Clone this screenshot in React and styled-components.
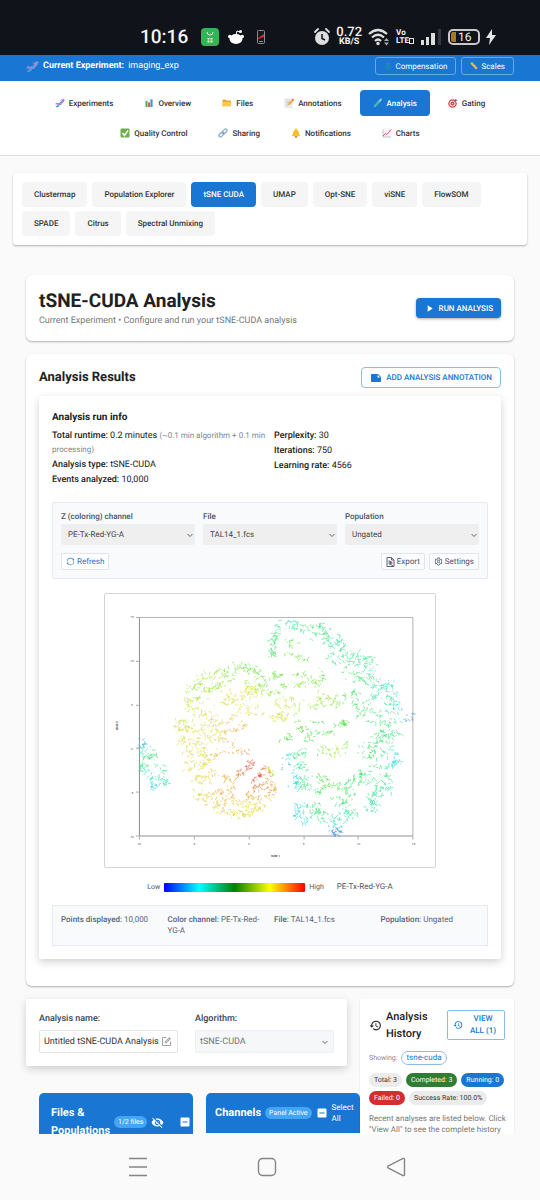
import { useMemo, useState } from 'react';
import styled, { createGlobalStyle } from 'styled-components';
import { MdHistory, MdIndeterminateCheckBox, MdNote, MdPlayArrow, MdVisibilityOff } from 'react-icons/md';
import { AiOutlineForm, AiOutlineSetting, AiOutlineSync } from 'react-icons/ai';

const navItems = [
  { label: 'Experiments', icon: 'dna' },
  { label: 'Overview', icon: 'bars' },
  { label: 'Files', icon: 'folder' },
  { label: 'Annotations', icon: 'memo' },
  { label: 'Analysis', icon: 'tube' },
  { label: 'Gating', icon: 'target' },
  { label: 'Quality Control', icon: 'check' },
  { label: 'Sharing', icon: 'link' },
  { label: 'Notifications', icon: 'bell' },
  { label: 'Charts', icon: 'trend' },
];

const tabs = [
  'Clustermap', 'Population Explorer', 'tSNE CUDA', 'UMAP', 'Opt-SNE', 'viSNE', 'FlowSOM',
  'SPADE', 'Citrus', 'Spectral Unmixing',
];

const selects = [
  { id: 'channel', label: 'Z (coloring) channel', value: 'PE-Tx-Red-YG-A' },
  { id: 'file', label: 'File', value: 'TAL14_1.fcs' },
  { id: 'population', label: 'Population', value: 'Ungated' },
];

const facts = [
  ['Points displayed:', '10,000'],
  ['Color channel:', 'PE-Tx-Red-YG-A'],
  ['File:', 'TAL14_1.fcs'],
  ['Population:', 'Ungated'],
];

const chips = [
  { text: 'Total: 3' },
  { text: 'Completed: 3', color: '#2e7d32' },
  { text: 'Running: 0', color: '#1976d2' },
  { text: 'Failed: 0', color: '#d32f2f' },
  { text: 'Success Rate: 100.0%' },
];

/* strands of the embedding: points, spread, number of dots */
const strands = [
  [[[272, 655], [273, 640], [276, 632]], 3, 80],
  [[[276, 632], [284, 622], [297, 622], [302, 627]], 6, 90],
  [[[305, 637], [312, 628], [318, 625]], 6, 55],
  [[[316, 634], [326, 632], [332, 642]], 6, 70],
  [[[332, 645], [342, 636], [345, 648]], 5, 60],
  [[[330, 658], [344, 656], [358, 652]], 6, 80],
  [[[347, 668], [360, 660], [371, 660], [370, 670]], 7, 100],
  [[[352, 675], [366, 676], [378, 684]], 7, 90],
  [[[376, 686], [388, 684], [392, 684]], 5, 60],
  [[[384, 694], [394, 694], [398, 706]], 5, 60],
  [[[388, 706], [404, 708]], 5, 35],
  [[[372, 719], [388, 722], [400, 718], [413, 716]], 4, 75],
  [[[376, 732], [388, 734], [398, 730]], 5, 65],
  [[[289, 640], [296, 642]], 4, 25],
  [[[288, 652], [296, 654], [309, 658]], 3, 40],
  [[[271, 672], [283, 674]], 3, 35],
  [[[281, 685], [292, 683], [303, 682]], 3, 45],
  [[[297, 674], [308, 673]], 4, 25],
  [[[306, 683], [320, 680], [318, 666]], 4, 50],
  [[[308, 702], [316, 706], [324, 700], [324, 692]], 5, 55],
  [[[326, 702], [336, 700], [343, 697]], 6, 60],
  [[[355, 687], [358, 697], [362, 714], [369, 702]], 5, 85],
  [[[371, 692], [378, 697]], 4, 25],
  [[[298, 720], [302, 729], [312, 733]], 4, 50],
  [[[313, 718], [325, 722], [344, 723], [345, 717]], 3, 60],
  [[[320, 731], [334, 731]], 2, 25],
  [[[375, 708], [380, 714]], 4, 20],
  [[[282, 738], [290, 734]], 5, 30],
  [[[303, 732], [312, 738]], 5, 30],
  [[[318, 750], [330, 747], [336, 753], [348, 742]], 5, 80],
  [[[363, 748], [374, 746], [380, 738], [392, 738]], 6, 90],
  [[[366, 754], [380, 752], [396, 748]], 5, 60],
  [[[373, 767], [385, 765], [398, 762], [396, 752]], 3, 80],
  [[[375, 778], [388, 774], [391, 788], [378, 782]], 4, 80],
  [[[368, 790], [376, 796], [382, 788]], 4, 45],
  [[[362, 808], [374, 810], [376, 801], [368, 798]], 3, 70],
  [[[363, 784], [366, 772]], 4, 45],
  [[[346, 784], [351, 794], [353, 778], [360, 772]], 5, 90],
  [[[315, 779], [324, 775], [326, 785], [343, 785]], 4, 85],
  [[[318, 791], [321, 789]], 3, 20],
  [[[334, 798], [345, 800], [352, 810], [358, 815]], 5, 75],
  [[[286, 768], [288, 754], [297, 756], [306, 748]], 4, 75],
  [[[293, 772], [300, 762], [306, 768]], 4, 45],
  [[[293, 780], [300, 784], [308, 786]], 5, 80],
  [[[296, 773], [305, 779]], 4, 35],
  [[[297, 803], [298, 812], [302, 820], [312, 815]], 4, 85],
  [[[304, 806], [322, 804]], 4, 35],
  [[[314, 812], [320, 808], [322, 820]], 4, 50],
  [[[330, 813], [332, 824], [336, 834], [341, 828], [338, 812]], 3, 110],
  [[[347, 808], [348, 820]], 3, 25],

  [[[188, 690], [196, 684], [203, 676], [214, 673]], 6, 75],
  [[[213, 674], [226, 671], [236, 664], [246, 666], [254, 670]], 5, 110],
  [[[254, 668], [264, 678], [276, 675]], 5, 50],
  [[[179, 717], [182, 728], [188, 722]], 6, 90],
  [[[184, 702], [196, 700], [206, 690]], 6, 75],
  [[[208, 688], [220, 682], [236, 674]], 6, 80],
  [[[226, 690], [238, 696], [250, 686], [256, 678]], 6, 95],
  [[[216, 704], [228, 698], [240, 704]], 5, 55],
  [[[244, 692], [258, 690], [268, 694]], 6, 65],
  [[[262, 684], [274, 690], [282, 702], [296, 700]], 6, 90],
  [[[262, 714], [276, 716], [286, 716], [296, 706]], 5, 95],
  [[[190, 712], [202, 710], [212, 712]], 5, 55],
  [[[206, 720], [216, 722], [228, 718], [236, 714]], 4, 60],
  [[[240, 708], [250, 712], [254, 704]], 5, 45],
  [[[193, 726], [206, 730], [214, 724]], 5, 55],
  [[[218, 731], [228, 730], [241, 728]], 2, 40],
  [[[243, 728], [243, 722]], 3, 18],
  [[[183, 738], [190, 742], [204, 738]], 5, 75],
  [[[186, 750], [198, 752], [206, 744]], 5, 65],
  [[[188, 764], [200, 766], [208, 762]], 5, 70],
  [[[207, 740], [220, 736], [232, 742]], 4, 45],
  [[[200, 756], [214, 756], [220, 748], [236, 750], [245, 752]], 4, 85],
  [[[194, 778], [206, 780], [212, 772]], 6, 75],
  [[[196, 791], [206, 798], [216, 790]], 5, 70],
  [[[207, 801], [218, 804], [226, 798]], 5, 55],
  [[[218, 808], [232, 812], [246, 814]], 4, 75],
  [[[246, 812], [256, 808], [262, 806]], 4, 60],
  [[[222, 772], [228, 778], [234, 790]], 4, 60],
  [[[236, 776], [243, 770], [252, 763], [250, 760]], 3, 75],
  [[[251, 780], [262, 775], [258, 772]], 2, 40],
  [[[265, 764], [270, 772], [273, 786], [270, 796]], 4, 120],
  [[[248, 794], [254, 788], [266, 784]], 4, 75],
  [[[238, 804], [250, 800], [262, 798]], 5, 75],
  [[[220, 790], [234, 800]], 5, 40],

  [[[141, 738], [143, 750], [142, 762], [144, 770]], 3, 80],
  [[[146, 746], [150, 754], [154, 756]], 4, 45],
  [[[142, 768], [150, 772], [156, 782], [152, 786]], 4, 80],
  [[[158, 764], [164, 768], [162, 778], [166, 782]], 4, 65],
];

/* known expression hues, everything else is blended from these */
const hues = [
  [141, 740, 190], [155, 786, 185], [152, 756, 145], [163, 768, 145], [185, 740, 60], [180, 717, 68],
  [235, 662, 100], [205, 674, 85], [240, 700, 62], [190, 765, 57], [252, 763, 8], [268, 785, 34],
  [258, 774, 10], [228, 755, 40], [236, 730, 42], [210, 730, 58], [245, 814, 55], [205, 795, 57],
  [228, 785, 40], [272, 640, 138], [288, 617, 160], [290, 650, 100], [280, 675, 105], [275, 714, 62],
  [312, 628, 140], [342, 636, 158], [362, 660, 150], [392, 684, 160], [412, 717, 200], [350, 675, 136],
  [325, 700, 90], [300, 700, 75], [335, 748, 80], [398, 755, 178], [366, 752, 135], [325, 722, 120],
  [388, 722, 144], [384, 740, 142], [380, 775, 144],
  [286, 765, 200], [303, 755, 140], [294, 782, 175], [306, 782, 144], [330, 782, 115], [298, 816, 185],
  [336, 834, 210], [336, 815, 160], [375, 810, 158], [352, 790, 135], [392, 788, 160], [320, 806, 140],
];

function hueAt(x, y) {
  let sum = 0;
  let weight = 0;
  hues.forEach(([hx, hy, hue]) => {
    const d = (x - hx) ** 2 + (y - hy) ** 2 + 4;
    const w = 1 / d ** 2;
    sum += hue * w;
    weight += w;
  });
  return sum / weight;
}

function buildDots() {
  let seed = 4566;
  const rand = () => {
    seed = (seed * 1664525 + 1013904223) % 4294967296;
    return seed / 4294967296;
  };
  const groups = {};
  strands.forEach(([points, spread, count]) => {
    for (let i = 0; i < count; i += 2) {
      const t = rand() * (points.length - 1);
      const k = Math.floor(t);
      const [ax, ay] = points[k];
      const [bx, by] = points[k + 1];
      const x = Math.max(140, ax + (bx - ax) * (t - k) + (rand() - 0.5) * spread * 2.2);
      const y = Math.max(617, Math.min(834, ay + (by - ay) * (t - k) + (rand() - 0.5) * spread * 1.8));
      const hue = Math.round((hueAt(x, y) + (rand() - 0.5) * 20) / 8) * 8;
      const angle = rand() * Math.PI;
      const reach = 1 + rand() * 3;
      const dx = Math.cos(angle) * reach;
      const dy = Math.sin(angle) * reach;
      groups[hue] = (groups[hue] || '') + `M${x.toFixed(1)} ${y.toFixed(1)}l${dx.toFixed(1)} ${dy.toFixed(1)}`;
    }
  });
  return Object.entries(groups);
}

function Scatter() {
  const dots = useMemo(buildDots, []);
  return (
    <Plot viewBox="105 593 330 274" role="img" aria-label="tSNE plot">
      <path d="M139.500 616.500H413.500V835.500" fill="none" stroke="#b4b4b4" />
      <path d="M139.500 616.500V835.500H413.500" fill="none" stroke="#909090" />
      <path
        d="M136 616.500h3M136 660.500h3M136 704.500h3M136 747.500h3M136 791.500h3M136 835.500h3M139.500 836v3M194.500 836v3M249.500 836v3M304.500 836v3M358.500 836v3M413.500 836v3"
        stroke="#aaa"
      />
      {dots.map(([hue, d]) => (
        <path key={hue} d={d} fill="none" stroke={`hsl(${hue} 75% 52%)`} strokeWidth="0.65" opacity="0.85" />
      ))}
      <g fontFamily="Roboto, sans-serif" fontSize="3" fill="#444" textAnchor="middle">
        {[15, 10, 5, 0, -5, -10].map((n, i) => (
          <text key={n} x="132" y={617 + i * 44}>{n}</text>
        ))}
        {[-10, -5, 0, 5, 10, 15].map((n, i) => (
          <text key={n} x={139 + i * 55} y="845">{n}</text>
        ))}
        <text x="276" y="857" fontWeight="700">tSNE 1</text>
        <text transform="translate(118 725) rotate(-90)" fontWeight="700">tSNE 2</text>
      </g>
    </Plot>
  );
}

function Emoji({ name }) {
  return (
    <EmojiSvg viewBox="0 0 20 20" aria-hidden="true">
      {name === 'dna' && (
        <g fill="none" strokeLinecap="round">
          <path d="M3 17c6 1 4-5 7-7s7 0 7-7" stroke="#38a9d8" strokeWidth="2.800" />
          <path d="M2 12c2-4 7 3 10 0s0-9 6-8" stroke="#9a8be0" strokeWidth="2.600" />
          <path d="M4 11l2 5M11 5l5 4M13 3l4 4" stroke="#c07ad0" strokeWidth="1.400" />
        </g>
      )}
      {name === 'bars' && (
        <g>
          <path d="M1 1h18v18H1z" fill="#eef1f3" />
          <path d="M3 6h4v12H3z" fill="#5bb04b" />
          <path d="M8 9h4v9H8z" fill="#e05a4f" />
          <path d="M13 3h4v15h-4z" fill="#3c8fdc" />
        </g>
      )}
      {name === 'folder' && (
        <g>
          <path d="M1 4q0-1 1-1h5l2 2h8q1 0 1 1v10H1z" fill="#e8a92e" />
          <path d="M2 8h17l-1 9H1z" fill="#fccb4b" />
        </g>
      )}
      {name === 'memo' && (
        <g>
          <path d="M2 2h14v17H2z" fill="#f3f0e8" stroke="#c9c9c9" />
          <path d="M5 6h8M5 9h7M5 12h5M5 15h4" stroke="#8fa4b3" />
          <path d="M8 15l1-4 8-9 3 2-8 9z" fill="#f3a52e" />
          <path d="M16 3l1-2 3 2-1 2z" fill="#e0585a" />
        </g>
      )}
      {name === 'tube' && (
        <g strokeLinecap="round">
          <path d="M16 3L4 16" stroke="#8fc5e6" strokeWidth="4" />
          <path d="M12 8l-8 8" stroke="#2fb59a" strokeWidth="3" />
        </g>
      )}
      {name === 'target' && (
        <g>
          <circle cx="9" cy="11" r="8.500" fill="#d8414a" />
          <circle cx="9" cy="11" r="6" fill="#f7e9e6" />
          <circle cx="9" cy="11" r="4" fill="#d8414a" />
          <circle cx="9" cy="11" r="1.500" fill="#f7e9e6" />
          <path d="M9 11l8-8M15 2v3h4" fill="none" stroke="#4a77a8" strokeWidth="1.500" />
        </g>
      )}
      {name === 'check' && (
        <g>
          <rect x="1" y="1" width="18" height="18" rx="2" fill="#6bb04b" />
          <path d="M5 10l4 5 7-10" fill="none" stroke="#fff" strokeWidth="2.800" />
        </g>
      )}
      {name === 'link' && (
        <g fill="none" stroke="#86a9c4" strokeWidth="2.400">
          <rect x="8" y="4" width="11" height="6" rx="3" transform="rotate(-45 13 7)" />
          <rect x="1" y="10" width="11" height="6" rx="3" transform="rotate(-45 7 13)" />
          <path d="M8 12l4-4" />
        </g>
      )}
      {name === 'bell' && (
        <g>
          <circle cx="10" cy="17" r="2.500" fill="#c98a1d" />
          <path d="M10 1q2 0 2 2 4 2 4 7 0 4 3 6H1q3-2 3-6 0-5 4-7 0-2 2-2z" fill="#fbbf2d" />
        </g>
      )}
      {name === 'trend' && (
        <g fill="none">
          <path d="M1 1h18v18H1z" fill="#f5f5f7" />
          <path d="M2 3v15h16" stroke="#a9b7c2" strokeWidth="1.500" />
          <path d="M2 16l5-5 3 2 8-10" stroke="#dc4a5c" strokeWidth="1.800" />
        </g>
      )}
      {name === 'scale' && (
        <path d="M10 3v14M3 5h14M6 17h8M1 12h5M14 12h5" fill="none" stroke="#2b9f9b" strokeWidth="1.800" />
      )}
      {name === 'ruler' && (
        <g>
          <path d="M1 4l4-4 14 15-4 4z" fill="#fbc540" />
          <path d="M6 3L4 5M9 6L7 8M12 9l-2 2M15 12l-2 2" stroke="#a9711a" />
        </g>
      )}
    </EmojiSvg>
  );
}

function StatusIcons() {
  return (
    <StatusGroup>
      <svg width="16" height="18" viewBox="0 0 16 18">
        <circle cx="8" cy="10" r="7" fill="#dedede" />
        <path d="M1 4l3-3M15 4l-3-3" stroke="#dedede" strokeWidth="1.800" strokeLinecap="round" />
        <path d="M8 6v4.500l3 1.500" fill="none" stroke="#10131a" strokeWidth="1.500" />
      </svg>
      <Speed><b>0.72</b><span>KB/S</span></Speed>
      <svg width="22" height="18" viewBox="0 0 22 18">
        <g fill="none" stroke="#dedede" strokeWidth="2.200">
          <path d="M1 6q9-8 18 0" />
          <path d="M4 9.500q6-5.500 12 0" />
          <path d="M7 13q3-3 6 0" />
        </g>
        <circle cx="10" cy="15.500" r="1.700" fill="#dedede" />
        <path d="M16 13l2.500-3 2.500 3zM16 14.500l2.500 3 2.500-3z" fill="#aaa" />
      </svg>
      <Volte><span>Vo</span><span>LTE<i /></span></Volte>
      <svg width="22" height="17" viewBox="0 0 22 17">
        <path d="M1 12h3v5H1zM6 9h3v8H6zM11 5h4v12h-4z" fill="#dedede" />
        <path d="M18 1h3v16h-3z" fill="#35383f" />
      </svg>
      <Battery><i /><span>16</span></Battery>
      <svg width="10" height="16" viewBox="0 0 10 16">
        <path d="M6 0L0 9h4l-1 7 7-10H6z" fill="#e6e6e6" />
      </svg>
    </StatusGroup>
  );
}

function App() {
  const [activeNav, setActiveNav] = useState('Analysis');
  const [activeTab, setActiveTab] = useState('tSNE CUDA');
  const [name, setName] = useState('Untitled tSNE-CUDA Analysis');

  return (
    <Screen>
      <GlobalStyle />
      <StatusBar>
        <StatusLeft>
          <Clock>10:16</Clock>
          <svg width="18" height="18" viewBox="0 0 18 18">
            <rect width="18" height="18" rx="4" fill="#33b457" />
            <path d="M6 4q0 3 3 3t3-3" fill="none" stroke="#d9f5df" />
            <path d="M6.500 10h2v1.500h-2zM9.500 10h2v1.500h-2zM6.500 12.500h2v2h-2zM9.500 12.500h2v2h-2z" fill="#e8fbec" />
          </svg>
          <svg width="16" height="16" viewBox="0 0 16 16">
            <ellipse cx="8" cy="10" rx="6.500" ry="5" fill="#fff" />
            <circle cx="1.800" cy="7.500" r="1.800" fill="#fff" />
            <circle cx="14.200" cy="7.500" r="1.800" fill="#fff" />
            <path d="M8 6l1-4 3 1" fill="none" stroke="#fff" />
            <circle cx="12.500" cy="2.500" r="1.500" fill="#fff" />
          </svg>
          <svg width="16" height="16" viewBox="0 0 16 16">
            <rect x="4.500" y="1.500" width="7" height="13" rx="1" fill="#15171d" stroke="#8c8c8c" />
            <path d="M5 9l3-2 3-2v3l-3 1-3 1z" fill="#e3262f" />
            <path d="M6 12.500h4" stroke="#8c8c8c" />
          </svg>
        </StatusLeft>
        <StatusIcons />
      </StatusBar>

      <Viewport>
        <ExperimentBar>
          <Emoji name="dna" />
          <strong>Current Experiment:</strong>
          <span>imaging_exp</span>
          <BarActions>
            <BarButton type="button"><Emoji name="scale" />Compensation</BarButton>
            <BarButton type="button"><Emoji name="ruler" />Scales</BarButton>
          </BarActions>
        </ExperimentBar>

        <Nav>
          {navItems.map((item) => (
            <NavButton key={item.label} type="button" $active={activeNav === item.label} onClick={() => setActiveNav(item.label)}>
              <Emoji name={item.icon} />
              {item.label}
            </NavButton>
          ))}
        </Nav>

        <TabPanel>
          {tabs.map((tab) => (
            <TabButton key={tab} type="button" $active={activeTab === tab} onClick={() => setActiveTab(tab)}>
              {tab}
            </TabButton>
          ))}
        </TabPanel>

        <Main>
          <HeaderCard>
            <div>
              <PageTitle>tSNE-CUDA Analysis</PageTitle>
              <Subtitle>Current Experiment • Configure and run your tSNE-CUDA analysis</Subtitle>
            </div>
            <RunButton type="button"><MdPlayArrow size={11} />RUN ANALYSIS</RunButton>
          </HeaderCard>

          <ResultsCard>
            <ResultsHead>
              <h2>Analysis Results</h2>
              <AnnotationButton type="button"><MdNote size={12} />ADD ANALYSIS ANNOTATION</AnnotationButton>
            </ResultsHead>

            <ResultsPanel>
              <h3>Analysis run info</h3>
              <RunInfo>
                <InfoColumn>
                  <p><b>Total runtime:</b> 0.2 minutes <small>(~0.1 min algorithm + 0.1 min processing)</small></p>
                  <p><b>Analysis type:</b> tSNE-CUDA</p>
                  <p><b>Events analyzed:</b> 10,000</p>
                </InfoColumn>
                <InfoColumn>
                  <p><b>Perplexity:</b> 30</p>
                  <p><b>Iterations:</b> 750</p>
                  <p><b>Learning rate:</b> 4566</p>
                </InfoColumn>
              </RunInfo>

              <Controls>
                <SelectGrid>
                  {selects.map((item) => (
                    <Field key={item.id}>
                      <label htmlFor={item.id}>{item.label}</label>
                      <GreySelect id={item.id}><option>{item.value}</option></GreySelect>
                    </Field>
                  ))}
                </SelectGrid>
                <ToolRow>
                  <ToolButton type="button" $primary><AiOutlineSync size={9} />Refresh</ToolButton>
                  <ToolGap />
                  <ToolButton type="button">
                    <svg width="9" height="10" viewBox="0 0 18 20" fill="none" stroke="currentColor" strokeWidth="1.800">
                      <path d="M2 1h9l5 5v13H2zM11 1v5h5" />
                      <circle cx="9" cy="12" r="3" />
                      <path d="M5 8h3M9 9v6M11 17h3" />
                    </svg>
                    Export
                  </ToolButton>
                  <ToolButton type="button"><AiOutlineSetting size={9} />Settings</ToolButton>
                </ToolRow>
              </Controls>

              <PlotFrame><Scatter /></PlotFrame>

              <Legend>
                <span>Low</span>
                <Ramp />
                <span>High</span>
                <LegendName>PE-Tx-Red-YG-A</LegendName>
              </Legend>

              <Facts>
                {facts.map(([label, value]) => (
                  <p key={label}><b>{label}</b> {value}</p>
                ))}
              </Facts>
            </ResultsPanel>
          </ResultsCard>

          <LowerRow>
            <LowerLeft>
              <FormCard>
                <FormField>
                  <label htmlFor="name">Analysis name:</label>
                  <NameBox>
                    <input id="name" value={name} onChange={(e) => setName(e.target.value)} />
                    <AiOutlineForm size={11} />
                  </NameBox>
                </FormField>
                <FormField>
                  <label htmlFor="algorithm">Algorithm:</label>
                  <AlgorithmSelect id="algorithm"><option>tSNE-CUDA</option></AlgorithmSelect>
                </FormField>
              </FormCard>

              <BlueRow>
                <BlueCard>
                  <BlueHead $tall>
                    <h3>Files &amp; Populations</h3>
                    <Pill>1/2 files</Pill>
                    <MdVisibilityOff size={13} />
                    <HeadGap />
                    <MdIndeterminateCheckBox size={12} />
                  </BlueHead>
                </BlueCard>
                <BlueCard>
                  <BlueHead>
                    <h3>Channels</h3>
                    <Pill>Panel Active</Pill>
                    <MdIndeterminateCheckBox size={12} />
                    <span>Select All</span>
                  </BlueHead>
                </BlueCard>
              </BlueRow>
            </LowerLeft>

            <HistoryCard>
              <HistoryHead>
                <MdHistory size={13} />
                <h3>Analysis History</h3>
                <ViewAll type="button"><MdHistory size={10} /><span>VIEW ALL (1)</span></ViewAll>
              </HistoryHead>
              <Showing>Showing: <Tag>tsne-cuda</Tag></Showing>
              <ChipRow>
                {chips.map((chip) => (
                  <Chip key={chip.text} $color={chip.color}>{chip.text}</Chip>
                ))}
              </ChipRow>
              <HistoryText>Recent analyses are listed below. Click "View All" to see the complete history</HistoryText>
            </HistoryCard>
          </LowerRow>
        </Main>
      </Viewport>

      <SystemNav>
        <SystemButton type="button" aria-label="Recent apps">
          <svg width="20" height="20" viewBox="0 0 20 20"><path d="M1 1.500h18M1 10h18M1 18.500h18" stroke="#858585" strokeWidth="1.500" /></svg>
        </SystemButton>
        <SystemButton type="button" aria-label="Home">
          <svg width="20" height="20" viewBox="0 0 20 20"><rect x="1.500" y="1.500" width="17" height="17" rx="4" fill="none" stroke="#858585" strokeWidth="1.400" /></svg>
        </SystemButton>
        <SystemButton type="button" aria-label="Back">
          <svg width="20" height="20" viewBox="0 0 20 20"><path d="M2 9.200L17 1.500q1.500-.5 1.500 1v15q0 1.500-1.500 1L2 10.800q-1-.8 0-1.600z" fill="none" stroke="#858585" strokeWidth="1.400" /></svg>
        </SystemButton>
      </SystemNav>
    </Screen>
  );
}

const chevron = `url("data:image/svg+xml,%3Csvg xmlns='http://www.w3.org/2000/svg' width='8' height='8' fill='none' stroke='%23555' stroke-width='0.900'%3E%3Cpath d='M1.500 3L4 5.500 6.500 3'/%3E%3C/svg%3E")`;

const GlobalStyle = createGlobalStyle`
  * {
    box-sizing: border-box;
  }
  body {
    margin: 0;
    background: #fafafa;
    color: #212121;
    font-family: Roboto, "Liberation Sans", sans-serif;
    font-size: 8px;
    text-rendering: geometricPrecision;
  }
  h1, h2, h3, p {
    margin: 0;
  }
  button, input, select {
    font-family: inherit;
    margin: 0;
    text-rendering: inherit;
  }
  button {
    cursor: pointer;
  }
  svg {
    flex-shrink: 0;
  }
`;

const Screen = styled.div`
  height: 100vh;
  display: flex;
  flex-direction: column;
`;

const StatusBar = styled.div`
  height: 55px;
  flex-shrink: 0;
  padding: 18px 44px 0 140px;
  display: flex;
  justify-content: space-between;
  align-items: center;
  background: #10131a;
  color: #f5f5f5;
`;

const StatusLeft = styled.div`
  display: flex;
  align-items: center;
  gap: 9px;
`;

const Clock = styled.div`
  margin-right: 4px;
  font-size: 19px;
  font-weight: 500;
`;

const StatusGroup = styled.div`
  display: flex;
  align-items: center;
  gap: 6px;
`;

const Speed = styled.div`
  display: flex;
  flex-direction: column;
  align-items: center;
  font-size: 9px;
  font-weight: 700;
  line-height: 9px;
  b {
    font-size: 13px;
    font-weight: 500;
    line-height: 11px;
  }
`;

const Volte = styled.div`
  display: flex;
  flex-direction: column;
  font-size: 8px;
  font-weight: 700;
  line-height: 8px;
  span {
    display: flex;
    align-items: center;
  }
  i {
    width: 5px;
    height: 6px;
    border: 1px solid #e6e6e6;
  }
`;

const Battery = styled.div`
  width: 32px;
  height: 16px;
  display: flex;
  align-items: center;
  gap: 2px;
  padding: 1px;
  border: 2px solid #c9c9c9;
  border-radius: 5px;
  font-size: 12px;
  line-height: 12px;
  i {
    width: 5px;
    height: 100%;
    border-radius: 2px 0 0 2px;
    background: #a9781f;
  }
`;

const Viewport = styled.div`
  flex: 1;
  min-height: 0;
  overflow: hidden;
`;

const EmojiSvg = styled.svg`
  width: 10px;
  height: 10px;
`;

const ExperimentBar = styled.div`
  display: flex;
  align-items: center;
  gap: 4px;
  padding: 2px 26px 6px;
  background: #1976d2;
  color: #fff;
  font-size: 9px;
  ${EmojiSvg} {
    width: 13px;
    height: 13px;
  }
`;

const BarActions = styled.div`
  margin-left: auto;
  display: flex;
  gap: 5px;
`;

const BarButton = styled.button`
  height: 18px;
  display: flex;
  align-items: center;
  gap: 3px;
  padding: 0 8px;
  border: 1px solid #6aa8e4;
  border-radius: 3px;
  background: transparent;
  color: #fff;
  font-size: 8px;
  ${EmojiSvg} {
    width: 8px;
    height: 8px;
  }
`;

const Nav = styled.nav`
  display: flex;
  flex-wrap: wrap;
  justify-content: center;
  gap: 4px 5px;
  padding: 9px 26px;
  background: #fff;
  border-bottom: 1px solid #e0e0e0;
`;

const NavButton = styled.button`
  height: 26px;
  display: flex;
  align-items: center;
  gap: 4px;
  padding: 0 13px;
  border: 0;
  border-radius: 4px;
  background: ${(props) => (props.$active ? '#1976d2' : 'transparent')};
  color: ${(props) => (props.$active ? '#fff' : '#333')};
  font-size: 8px;
  font-weight: 500;
`;

const TabPanel = styled.div`
  display: flex;
  flex-wrap: wrap;
  gap: 4px 5px;
  margin: 17px 13px 0;
  padding: 9px;
  background: #fff;
  border-radius: 3px;
  box-shadow: 0 1px 2px rgba(0, 0, 0, 0.3);
`;

const TabButton = styled.button`
  height: 25px;
  padding: 0 12px;
  border: 0;
  border-radius: 4px;
  background: ${(props) => (props.$active ? '#1976d2' : '#f5f5f5')};
  color: ${(props) => (props.$active ? '#fff' : '#333')};
  font-size: 8px;
  font-weight: 500;
`;

const Main = styled.main`
  display: flex;
  flex-direction: column;
  gap: 13px;
  padding: 30px 26px 0;
`;

const Card = styled.section`
  background: #fff;
  border-radius: 6px;
  box-shadow: 0 1px 2px rgba(0, 0, 0, 0.3);
`;

const HeaderCard = styled(Card)`
  display: flex;
  align-items: center;
  justify-content: space-between;
  padding: 13px;
`;

const PageTitle = styled.h1`
  font-size: 19px;
  line-height: 26px;
`;

const Subtitle = styled.p`
  color: #777;
  font-size: 9px;
  line-height: 14px;
`;

const RunButton = styled.button`
  height: 20px;
  display: flex;
  align-items: center;
  gap: 4px;
  padding: 0 8px;
  border: 0;
  border-radius: 4px;
  background: #1976d2;
  box-shadow: 0 1px 3px rgba(0, 0, 0, 0.35);
  color: #fff;
  font-size: 8px;
  font-weight: 500;
`;

const ResultsCard = styled(Card)`
  padding: 13px 13px 27px;
`;

const ResultsHead = styled.div`
  display: flex;
  align-items: center;
  justify-content: space-between;
  margin-bottom: 8px;
  h2 {
    font-size: 13px;
    line-height: 20px;
  }
`;

const AnnotationButton = styled.button`
  height: 21px;
  display: flex;
  align-items: center;
  gap: 4px;
  padding: 0 8px;
  border: 1px solid #8dbbe8;
  border-radius: 4px;
  background: #fff;
  color: #1976d2;
  font-size: 8px;
  font-weight: 500;
`;

const ResultsPanel = styled.div`
  padding: 14px 13px 13px;
  background: #fff;
  border-radius: 3px;
  box-shadow: 0 3px 9px rgba(0, 0, 0, 0.18);
  h3 {
    font-size: 10px;
    line-height: 16px;
  }
`;

const RunInfo = styled.div`
  display: grid;
  grid-template-columns: 1fr 1fr;
  gap: 8px;
  margin-top: 3px;
`;

const InfoColumn = styled.div`
  display: flex;
  flex-direction: column;
  gap: 1px;
  font-size: 9px;
  line-height: 14px;
  b {
    font-weight: 500;
  }
  small {
    color: #7c8699;
    font-size: 8px;
    line-height: 12px;
  }
`;

const Controls = styled.div`
  margin-top: 15px;
  padding: 8px;
  border: 1px solid #e6eaef;
  border-radius: 2px;
  background: #f8fafc;
`;

const SelectGrid = styled.div`
  display: grid;
  grid-template-columns: repeat(3, 1fr);
  gap: 8px;
`;

const Field = styled.div`
  display: flex;
  flex-direction: column;
  gap: 1px;
  color: #4a5568;
  font-size: 8px;
  font-weight: 500;
  line-height: 12px;
`;

const GreySelect = styled.select`
  appearance: none;
  width: 100%;
  height: 21px;
  padding: 0 7px;
  border: 0;
  border-radius: 3px;
  background: #efefef ${chevron} no-repeat right 1px center;
  color: #444;
  font-size: 8px;
`;

const ToolRow = styled.div`
  display: flex;
  gap: 4px;
  margin-top: 8px;
`;

const ToolGap = styled.div`
  flex: 1;
`;

const ToolButton = styled.button`
  height: 17px;
  display: flex;
  align-items: center;
  gap: 2px;
  padding: 0 4px;
  border: 1px solid #e1e6ec;
  border-radius: 2px;
  background: ${(props) => (props.$primary ? '#fff' : '#fafcfe')};
  color: ${(props) => (props.$primary ? '#1976d2' : '#4a5568')};
  font-size: 8px;
`;

const PlotFrame = styled.div`
  width: 76%;
  margin: 14px auto 0;
  border: 1px solid #d5d5d5;
  border-radius: 2px;
`;

const Plot = styled.svg`
  display: block;
  width: 100%;
`;

const Legend = styled.div`
  display: flex;
  align-items: center;
  justify-content: center;
  gap: 4px;
  margin-top: 12px;
  color: #4a5568;
  font-size: 7px;
  line-height: 14px;
`;

const Ramp = styled.div`
  width: 141px;
  height: 9px;
  border-radius: 1px;
  background: linear-gradient(to right, blue, cyan, green, yellow, red);
`;

const LegendName = styled.span`
  margin-left: 9px;
  font-size: 8px;
`;

const Facts = styled.div`
  display: grid;
  grid-template-columns: repeat(4, 1fr);
  gap: 8px;
  margin-top: 11px;
  padding: 8px 8px 9px;
  border: 1px solid #e6eaef;
  background: #f8fafc;
  color: #5a6474;
  font-size: 8px;
  line-height: 11px;
  b {
    font-weight: 500;
  }
`;

const LowerRow = styled.div`
  display: grid;
  grid-template-columns: 321fr 154fr;
  gap: 13px;
  align-items: stretch;
`;

const LowerLeft = styled.div`
  min-width: 0;
`;

const FormCard = styled(Card)`
  display: grid;
  grid-template-columns: 1fr 1fr;
  gap: 17px;
  padding: 13px;
  border-radius: 2px;
  box-shadow: 0 3px 8px rgba(0, 0, 0, 0.18);
`;

const FormField = styled.div`
  display: flex;
  flex-direction: column;
  gap: 4px;
  min-width: 0;
  color: #37474f;
  font-size: 9px;
  font-weight: 500;
  line-height: 14px;
`;

const NameBox = styled.div`
  height: 23px;
  display: flex;
  align-items: center;
  padding: 0 5px 0 4px;
  border: 1px solid #e1e5ea;
  border-radius: 2px;
  color: #888;
  input {
    flex: 1;
    min-width: 0;
    padding: 0;
    border: 0;
    outline: 0;
    color: #333;
    font-size: 9px;
  }
`;

const AlgorithmSelect = styled.select`
  appearance: none;
  height: 23px;
  padding: 0 4px;
  border: 1px solid #eceff3;
  border-radius: 2px;
  background: #f5f7f9 ${chevron} no-repeat right 4px center;
  color: #6b7785;
  font-size: 9px;
`;

const BlueRow = styled.div`
  display: grid;
  grid-template-columns: 1fr 1fr;
  gap: 13px;
  margin: 27px -13px 0 13px;
`;

const BlueCard = styled.section`
  min-width: 0;
  min-height: 60px;
  border-radius: 5px 5px 0 0;
  overflow: hidden;
`;

const BlueHead = styled.header`
  height: ${(props) => (props.$tall ? '58px' : '40px')};
  display: flex;
  align-items: center;
  gap: 4px;
  padding: ${(props) => (props.$tall ? '0 2px 0 12px' : '0 4px 0 9px')};
  background: #1976d2;
  color: #fff;
  font-size: 8px;
  line-height: 11px;
  h3 {
    width: min-content;
    font-size: 11px;
    line-height: 18px;
  }
`;

const HeadGap = styled.div`
  flex: 1;
`;

const Pill = styled.span`
  padding: 0 4px;
  border-radius: 7px;
  background: #42a5f5;
  color: #fff;
  font-size: 7px;
  line-height: 12px;
  white-space: nowrap;
`;

const HistoryCard = styled(Card)`
  position: relative;
  min-height: 160px;
  padding: 9px;
  border-radius: 2px;
  box-shadow: 0 1px 2px rgba(0, 0, 0, 0.12);
`;

const HistoryHead = styled.div`
  display: flex;
  align-items: center;
  gap: 4px;
  h3 {
    flex: 1;
    font-size: 11px;
    font-weight: 500;
    line-height: 17px;
  }
`;

const ViewAll = styled.button`
  width: 58px;
  height: 30px;
  display: flex;
  align-items: center;
  gap: 4px;
  padding: 0 5px;
  border: 1px solid #8dbbe8;
  border-radius: 2px;
  background: #fff;
  color: #1976d2;
  font-size: 8px;
  font-weight: 500;
  line-height: 12px;
  span {
    flex: 1;
  }
`;

const Showing = styled.p`
  display: flex;
  align-items: center;
  gap: 4px;
  margin-top: 9px;
  color: #888;
  font-size: 7px;
`;

const Tag = styled.span`
  padding: 0 4px;
  border: 1px solid #8dbbe8;
  border-radius: 7px;
  color: #1976d2;
  font-size: 8px;
  line-height: 12px;
`;

const ChipRow = styled.div`
  display: flex;
  flex-wrap: wrap;
  gap: 4px;
  margin-top: 8px;
`;

const Chip = styled.span`
  padding: 0 5px;
  border-radius: 7px;
  background: ${(props) => props.$color || '#ebebeb'};
  color: ${(props) => (props.$color ? '#fff' : '#333')};
  font-size: 7px;
  line-height: 14px;
`;

const HistoryText = styled.p`
  margin: 8px -5px 0 0;
  color: #777;
  font-size: 8px;
  line-height: 11px;
`;

const SystemNav = styled.div`
  height: 66px;
  flex-shrink: 0;
  display: flex;
  align-items: center;
  justify-content: center;
  gap: 97px;
  padding-right: 6px;
  background: #fafafa;
`;

const SystemButton = styled.button`
  width: 32px;
  height: 32px;
  display: flex;
  align-items: center;
  justify-content: center;
  padding: 0;
  border: 0;
  background: transparent;
`;

export default App;
